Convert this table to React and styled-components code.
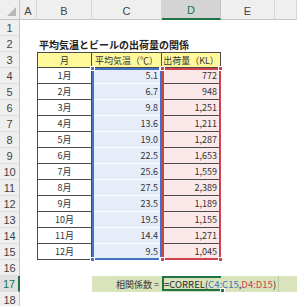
import React from 'react';
import styled, { createGlobalStyle, css } from 'styled-components';

const GlobalStyle = createGlobalStyle`
  html, body {
    margin: 0;
    padding: 0;
    background: #fff;
    overflow: hidden;
  }
  body {
    font-family: "Noto Sans CJK JP", "Noto Sans", sans-serif;
  }
`;

const data = [
  ['1月', '5.1', '772'],
  ['2月', '6.7', '948'],
  ['3月', '9.8', '1,251'],
  ['4月', '13.6', '1,211'],
  ['5月', '19.0', '1,287'],
  ['6月', '22.5', '1,653'],
  ['7月', '25.6', '1,559'],
  ['8月', '27.5', '2,389'],
  ['9月', '23.5', '1,189'],
  ['10月', '19.5', '1,155'],
  ['11月', '14.4', '1,271'],
  ['12月', '9.5', '1,045'],
];

const cols = ['A', 'B', 'C', 'D', 'E', 'F'];
const rows = Array.from({ length: 18 }, (_, i) => i + 1);

const LINE = '#4a4a4a';
const BLUE = '#4472c4';
const RED = '#d0424b';
const GREEN = '#217346';

const Sheet = styled.div`
  position: relative;
  display: grid;
  grid-template-columns: 20px 17px 55px 70px 59px 54px 22px;
  grid-template-rows: 20px repeat(18, 16px);
  width: 297px;
  height: 306px;
  overflow: hidden;
  color: #333;
  font-size: 9px;
`;

const headText = css`
  display: flex;
  align-items: center;
  justify-content: center;
  box-sizing: border-box;
  background: #efefef;
  color: #444;
  font-family: "Liberation Sans", Arial, sans-serif;
  font-size: 11px;
`;

const Corner = styled.div`
  ${headText};
  position: relative;
  border-right: 1px solid #c4c4c4;
  border-bottom: 1px solid #c4c4c4;
  &::after {
    content: '';
    position: absolute;
    right: 3px;
    bottom: 3px;
    border-left: 9px solid transparent;
    border-bottom: 9px solid #b9b9b9;
  }
`;

const ColHead = styled.div`
  ${headText};
  border-right: 1px solid #d6d6d6;
  border-bottom: 1px solid #c4c4c4;
  padding-top: 2px;
  ${(p) =>
    p.$active &&
    css`
      background: #d4d4d4;
      color: ${GREEN};
      border-bottom: 2px solid ${GREEN};
      border-right-color: #c2c2c2;
    `}
`;

const RowHead = styled.div`
  ${headText};
  border-right: 1px solid #c4c4c4;
  border-bottom: 1px solid #dcdcdc;
  ${(p) =>
    p.$active &&
    css`
      background: #e0e0e0;
      color: ${GREEN};
      border-right: 2px solid ${GREEN};
    `}
`;

const cellBase = css`
  display: flex;
  align-items: center;
  box-sizing: border-box;
  min-width: 0;
  padding: 0 3px;
  white-space: nowrap;
`;

const Blank = styled.div`
  ${cellBase};
`;

const Title = styled.div`
  ${cellBase};
  padding-left: 2px;
  font-size: 10px;
  font-weight: 700;
  color: #222;
  overflow: visible;
`;

const HeadCell = styled.div`
  ${cellBase};
  justify-content: center;
  background: #fff99c;
  border-top: 1px solid ${LINE};
  border-bottom: 1px solid ${LINE};
  border-right: 1px solid ${LINE};
  border-left: ${(p) => (p.$first ? `1px solid ${LINE}` : 'none')};
`;

const BodyCell = styled.div`
  ${cellBase};
  justify-content: ${(p) => (p.$align === 'center' ? 'center' : 'flex-end')};
  background: ${(p) => p.$fill || '#fff'};
  border-bottom: 1px solid ${(p) => p.$rule || LINE};
  border-right: 1px solid ${LINE};
  border-left: ${(p) => (p.$first ? `1px solid ${LINE}` : 'none')};
`;

const Band = styled.div`
  ${cellBase};
  justify-content: ${(p) => (p.$right ? 'flex-end' : 'flex-start')};
  background: #d9e4bd;
  overflow: visible;
  position: relative;
`;

const Editor = styled.span`
  position: relative;
  z-index: 3;
  display: flex;
  align-items: center;
  height: 100%;
  margin-left: -1px;
  padding-right: 2px;
  background: #d9e4bd;
  border-right: 1px solid #bfc9a8;
  font-size: 9.5px;
  color: #2b2b2b;
`;

const Ref = styled.span`
  color: ${(p) => p.$color};
`;

const Range = styled.div`
  position: absolute;
  inset: 0;
  grid-column: ${(p) => p.$col};
  grid-row: ${(p) => p.$rows};
  border: 2px solid ${(p) => p.$color};
  pointer-events: none;
  z-index: 2;
`;

const Handle = styled.span`
  position: absolute;
  width: 3px;
  height: 3px;
  background: ${(p) => p.$color};
  border: 1px solid #fff;
  ${(p) => (p.$v === 'top' ? 'top: -4px;' : 'bottom: -4px;')}
  ${(p) => (p.$h === 'left' ? 'left: -4px;' : 'right: -4px;')}
`;

const ActiveCell = styled.div`
  position: absolute;
  inset: 0 0 1px 0;
  grid-column: 5 / 6;
  grid-row: 18 / 19;
  border: 2px solid ${GREEN};
  border-right: none;
  pointer-events: none;
  z-index: 4;
`;

const Corners = ({ color }) => (
  <>
    <Handle $color={color} $v="top" $h="left" />
    <Handle $color={color} $v="top" $h="right" />
    <Handle $color={color} $v="bottom" $h="left" />
    <Handle $color={color} $v="bottom" $h="right" />
  </>
);

function renderCell(r, c) {
  const key = `${c}${r}`;
  if (r === 2 && c === 'B') {
    return <Title key={key}>平均気温とビールの出荷量の関係</Title>;
  }
  if (r === 3) {
    if (c === 'B') return <HeadCell key={key} $first>月</HeadCell>;
    if (c === 'C') return <HeadCell key={key}>平均気温（℃）</HeadCell>;
    if (c === 'D') return <HeadCell key={key}>出荷量（KL）</HeadCell>;
  }
  if (r >= 4 && r <= 15) {
    const [month, temp, ship] = data[r - 4];
    if (c === 'B') return <BodyCell key={key} $first $align="center">{month}</BodyCell>;
    if (c === 'C') return <BodyCell key={key} $fill="#e7edf8" $rule="#fbfcfe">{temp}</BodyCell>;
    if (c === 'D') return <BodyCell key={key} $fill="#fbe8e8">{ship}</BodyCell>;
  }
  if (r === 17) {
    if (c === 'C') return <Band key={key} $right>相関係数 =</Band>;
    if (c === 'D')
      return (
        <Band key={key}>
          <Editor>
            =CORREL(<Ref $color={BLUE}>C4:C15</Ref>,<Ref $color={RED}>D4:D15</Ref>)
          </Editor>
        </Band>
      );
    if (c === 'E' || c === 'F') return <Band key={key} />;
  }
  return <Blank key={key} />;
}

export default function App() {
  return (
    <>
      <GlobalStyle />
      <Sheet>
        <Corner />
        {cols.map((c) => (
          <ColHead key={c} $active={c === 'D'}>
            {c === 'F' ? '' : c}
          </ColHead>
        ))}
        {rows.map((r) => (
          <React.Fragment key={r}>
            <RowHead $active={r === 17}>{r}</RowHead>
            {cols.map((c) => renderCell(r, c))}
          </React.Fragment>
        ))}
        <Range $col="4 / 5" $rows="5 / 17" $color={BLUE}>
          <Corners color={BLUE} />
        </Range>
        <Range $col="5 / 6" $rows="5 / 17" $color={RED}>
          <Corners color={RED} />
        </Range>
        <ActiveCell>
          <Handle $color={GREEN} $v="bottom" $h="right" />
        </ActiveCell>
      </Sheet>
    </>
  );
}
